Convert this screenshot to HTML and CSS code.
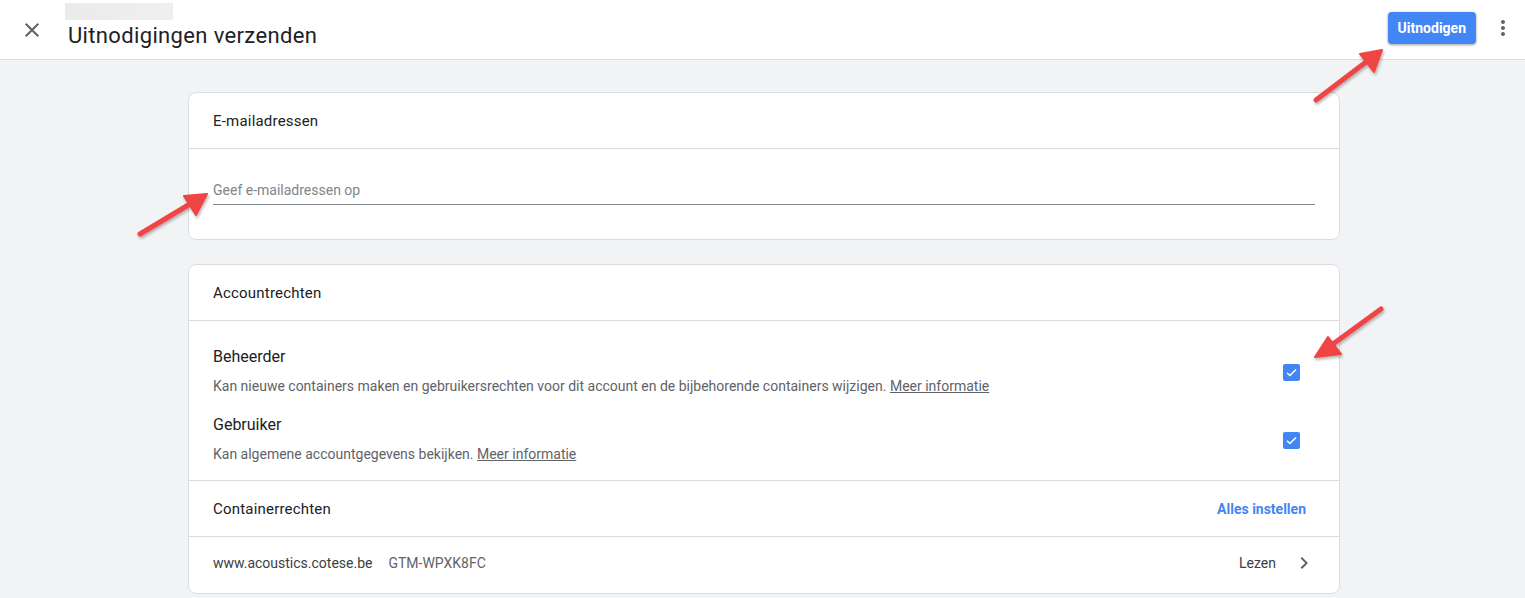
FILE: index.html
```html
<!DOCTYPE html>
<html lang="nl">

<head>
    <meta charset="UTF-8">
    <meta name="viewport" content="width=device-width, initial-scale=1.0">
    <link rel="stylesheet" href="styles.css">
    <title>Uitnodigingen verzenden</title>
</head>

<body>

    <header class="top-bar">
        <button class="icon-btn close-btn" type="button" aria-label="Sluiten">
            <svg width="24" height="24" viewBox="0 0 24 24">
                <path d="M19 6.41 17.59 5 12 10.59 6.41 5 5 6.41 10.59 12 5 17.59 6.41 19 12 13.41 17.59 19 19 17.59 13.41 12z" fill="#5f6368" />
            </svg>
        </button>
        <div class="title-wrap">
            <div class="crumb-placeholder"></div>
            <h1>Uitnodigingen verzenden</h1>
        </div>
        <button class="primary-btn" type="button">Uitnodigen</button>
        <button class="icon-btn more-btn" type="button" aria-label="Meer">
            <svg width="24" height="24" viewBox="0 0 24 24">
                <path d="M12 8c1.1 0 2-.9 2-2s-.9-2-2-2-2 .9-2 2 .9 2 2 2zm0 2c-1.1 0-2 .9-2 2s.9 2 2 2 2-.9 2-2-.9-2-2-2zm0 6c-1.1 0-2 .9-2 2s.9 2 2 2 2-.9 2-2-.9-2-2-2z" fill="#5f6368" />
            </svg>
        </button>
    </header>

    <main class="content">
        <section class="card">
            <div class="card-head">
                <h2>E-mailadressen</h2>
            </div>
            <div class="card-body email-body">
                <input class="email-input" type="text" placeholder="Geef e-mailadressen op">
            </div>
        </section>

        <section class="card">
            <div class="card-head">
                <h2>Accountrechten</h2>
            </div>
            <div class="card-body roles">
                <div class="role">
                    <div class="role-text">
                        <h3>Beheerder</h3>
                        <p>Kan nieuwe containers maken en gebruikersrechten voor dit account en de bijbehorende containers wijzigen. <a href="#">Meer informatie</a></p>
                    </div>
                    <span class="checkbox"><svg width="17" height="17" viewBox="0 0 18 18"><path d="M4.2 9.3 7.3 12.2 13.8 5.9" fill="none" stroke="#fff" stroke-width="1.6" /></svg></span>
                </div>
                <div class="role">
                    <div class="role-text">
                        <h3>Gebruiker</h3>
                        <p>Kan algemene accountgegevens bekijken. <a href="#">Meer informatie</a></p>
                    </div>
                    <span class="checkbox"><svg width="17" height="17" viewBox="0 0 18 18"><path d="M4.2 9.3 7.3 12.2 13.8 5.9" fill="none" stroke="#fff" stroke-width="1.6" /></svg></span>
                </div>
            </div>
            <div class="card-head section-head">
                <h2>Containerrechten</h2>
                <a class="text-btn" href="#">Alles instellen</a>
            </div>
            <div class="container-row">
                <span class="container-name">www.acoustics.cotese.be</span>
                <span class="container-id">GTM-WPXK8FC</span>
                <span class="container-role">Lezen</span>
                <svg width="24" height="24" viewBox="0 0 24 24">
                    <path d="M10 6 8.59 7.41 13.17 12l-4.58 4.59L10 18l6-6z" fill="#5f6368" />
                </svg>
            </div>
        </section>
    </main>

    <svg class="arrows" width="1525" height="598" viewBox="0 0 1525 598">
        <defs>
            <filter id="shadow" x="-20%" y="-20%" width="140%" height="140%">
                <feDropShadow dx="1" dy="2" stdDeviation="1.5" flood-color="#000" flood-opacity="0.3" />
            </filter>
        </defs>
        <g fill="#ef4444" stroke="#ef4444" stroke-linecap="round" stroke-linejoin="round" filter="url(#shadow)">
            <line x1="1316" y1="100" x2="1366" y2="62" stroke-width="5" />
            <polygon points="1382,50 1360,54 1374,72" stroke-width="2" />
            <line x1="140" y1="234" x2="190" y2="204" stroke-width="5" />
            <polygon points="207,194 184,196 196,215" stroke-width="2" />
            <line x1="1381" y1="309" x2="1333" y2="344" stroke-width="5" />
            <polygon points="1315,357 1328,337 1341,354" stroke-width="2" />
        </g>
    </svg>

</body>

</html>
```

FILE: styles.css
```css
html {
    overflow: hidden;
}

body {
    font-family: Roboto, 'Liberation Sans', Arial, sans-serif;
    margin: 0;
    padding: 0;
    background-color: #f1f3f4;
    color: #202124;
    position: relative;
    height: 598px;
}

.top-bar {
    display: flex;
    align-items: center;
    height: 59px;
    background-color: #fff;
    border-bottom: 1px solid #dadce0;
    padding: 0 10px 0 20px;
}

.icon-btn {
    display: flex;
    align-items: center;
    justify-content: center;
    width: 24px;
    height: 24px;
    padding: 0;
    border: none;
    background: none;
    cursor: pointer;
}

.close-btn {
    margin-right: 24px;
}

.title-wrap {
    flex: 1;
    align-self: stretch;
    position: relative;
    display: flex;
    align-items: center;
}

.crumb-placeholder {
    position: absolute;
    top: 3px;
    left: -3px;
    width: 108px;
    height: 17px;
    background: linear-gradient(90deg, #ebebeb, #efefef);
}

h1 {
    margin: 11px 0 0;
    font-size: 22px;
    font-weight: 400;
    color: #202124;
    letter-spacing: 0.35px;
}

.primary-btn {
    font-family: inherit;
    background-color: #4285f4;
    color: #fff;
    font-size: 14px;
    font-weight: 700;
    height: 32px;
    padding: 0 10px;
    border: none;
    border-radius: 4px;
    box-shadow: 0 1px 2px rgba(60, 64, 67, 0.3), 0 1px 3px 1px rgba(60, 64, 67, 0.15);
    cursor: pointer;
    margin-top: -4px;
    margin-right: 15px;
}

.more-btn {
    margin-top: -3px;
}

.content {
    width: 1152px;
    margin: 32px 0 0 188px;
    display: flex;
    flex-direction: column;
    gap: 24px;
}

.card {
    background-color: #fff;
    border: 1px solid #dadce0;
    border-radius: 8px;
    overflow: hidden;
}

.card-head {
    display: flex;
    align-items: center;
    justify-content: space-between;
    height: 55px;
    padding: 0 33px 0 24px;
    border-bottom: 1px solid #dadce0;
}

h2 {
    margin: 0;
    font-size: 15px;
    font-weight: 400;
    color: #202124;
    letter-spacing: 0.2px;
}

.email-body {
    padding: 30px 24px 34px;
}

.email-input {
    display: block;
    width: 100%;
    box-sizing: border-box;
    font-family: inherit;
    font-size: 14px;
    color: #202124;
    padding: 3px 0 6px;
    border: none;
    border-bottom: 1px solid #80868b;
    outline: none;
}

.email-input::placeholder {
    color: #80868b;
}

.roles {
    padding: 26px 39px 18px 24px;
    border-bottom: 1px solid #dadce0;
}

.role {
    display: flex;
    align-items: center;
    justify-content: space-between;
    margin-bottom: 21px;
}

.role:last-child {
    margin-bottom: 0;
}

h3 {
    margin: 0 0 12px;
    font-size: 16px;
    font-weight: 400;
    color: #202124;
}

.role-text p {
    margin: 0;
    font-size: 14px;
    color: #5f6368;
}

.role-text a {
    color: #5f6368;
    text-decoration: underline;
}

.checkbox {
    display: flex;
    width: 17px;
    height: 17px;
    margin-top: 3px;
    background-color: #4285f4;
    border-radius: 2px;
}

.text-btn {
    color: #4285f4;
    font-size: 14px;
    font-weight: 700;
    text-decoration: none;
}

.container-row {
    display: flex;
    align-items: center;
    height: 52px;
    padding: 0 23px 4px 24px;
    font-size: 14px;
    color: #3c4043;
}

.container-id {
    margin-left: 16px;
    flex: 1;
    color: #5f6368;
}

.container-role {
    margin-right: 16px;
}

.arrows {
    position: absolute;
    top: 0;
    left: 0;
    pointer-events: none;
}
```
